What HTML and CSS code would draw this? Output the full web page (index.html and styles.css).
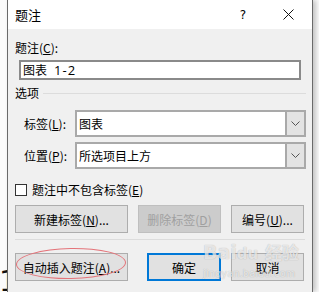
FILE: index.html
```html
<!DOCTYPE html>
<html lang="zh">
<head>
  <meta charset="UTF-8" />
  <title>题注</title>
  <link rel="stylesheet" href="styles.css">
</head>
<body>
  <div class="behind">1</div>
  <div class="dialog">
    <div class="titlebar">
      <span class="title">题注</span>
      <span class="help">?</span>
      <span class="close">
        <svg width="11" height="11" viewBox="0 0 11 11"><path d="M0.5 0.5 L10.5 10.5 M10.5 0.5 L0.5 10.5" stroke="#111" stroke-width="1" fill="none"/></svg>
      </span>
    </div>

    <div class="content">
      <div class="label">题注(<u>C</u>):</div>
      <div class="textbox">图表<span class="num">1-2</span></div>

      <div class="group"><span>选项</span><div class="rule"></div></div>

      <div class="field-row">
        <span class="field-label">标签(<u>L</u>):</span>
        <div class="combo">
          <span class="combo-text">图表</span>
          <span class="combo-btn"><svg width="9" height="5" viewBox="0 0 9 5"><path d="M0.5 0.5 L4.5 4.5 L8.5 0.5" stroke="#555" fill="none"/></svg></span>
        </div>
      </div>
      <div class="field-row second">
        <span class="field-label">位置(<u>P</u>):</span>
        <div class="combo">
          <span class="combo-text">所选项目上方</span>
          <span class="combo-btn"><svg width="9" height="5" viewBox="0 0 9 5"><path d="M0.5 0.5 L4.5 4.5 L8.5 0.5" stroke="#555" fill="none"/></svg></span>
        </div>
      </div>

      <div class="check"><span class="box"></span>题注中不包含标签(<u>E</u>)</div>

      <div class="btn-row">
        <button class="btn wide">新建标签(<u>N</u>)...</button>
        <button class="btn mid disabled">删除标签(<u>D</u>)</button>
        <button class="btn narrow">编号(<u>U</u>)...</button>
      </div>

      <div class="sep"></div>

      <div class="btn-row last">
        <button class="btn wide">自动插入题注(<u>A</u>)...</button>
        <button class="btn ok">确定</button>
        <button class="btn narrow">取消</button>
      </div>
    </div>

    <div class="ellipse"></div>
    <div class="watermark">
      <div class="wm-logo">Bai<span class="paw">du</span> <span class="wm-cn">经验</span></div>
      <div class="wm-url">jingyan.baidu.com</div>
    </div>
  </div>
</body>
</html>
```

FILE: styles.css
```css
body {
  margin: 0;
  padding: 0 0 0 7px;
  width: 319px;
  height: 292px;
  overflow: hidden;
  box-sizing: border-box;
  background: #fbfbfb;
  font-family: "Noto Sans CJK SC", "Noto Sans", sans-serif;
  font-size: 12px;
  color: #000;
  position: relative;
}

.behind {
  position: absolute;
  left: -1px;
  top: 266px;
  font-family: "DejaVu Sans", sans-serif;
  font-size: 29px;
  line-height: 30px;
  color: #111;
}

.dialog {
  position: relative;
  width: 306px;
  height: 292px;
  box-sizing: border-box;
  border-left: 1px solid #6a6a6a;
  border-right: 1px solid #6a6a6a;
  background: #f0f0f0;
  box-shadow: 3px 0 5px rgba(0, 0, 0, 0.22);
}

u {
  text-decoration: underline;
  text-underline-offset: 1px;
}

/* title bar */
.titlebar {
  height: 29px;
  background: #fff;
  display: flex;
  align-items: center;
  padding-left: 7px;
}

.title {
  font-size: 13px;
  line-height: 16px;
  flex: 1;
}

.help {
  font-family: "DejaVu Sans", sans-serif;
  font-size: 12px;
  width: 10px;
  text-align: center;
  margin-right: 35px;
}

.close {
  display: flex;
  width: 11px;
  margin-right: 18px;
}

/* body */
.content {
  padding: 11px 7px 0 7px;
}

.label {
  line-height: 16px;
}

.textbox {
  margin: 4px 0 0 4px;
  width: 282px;
  height: 20px;
  box-sizing: border-box;
  border: 2px solid #8a8a8a;
  background: #fff;
  line-height: 16px;
  padding-left: 2px;
  font-size: 12px;
}

.num {
  font-family: "Open Sans", sans-serif;
  font-size: 13px;
  letter-spacing: 1px;
  margin-left: 7px;
}

.group {
  margin-top: 5px;
  display: flex;
  align-items: center;
  line-height: 16px;
  margin-right: -1px;
}

.rule {
  flex: 1;
  height: 1px;
  background: #dcdcdc;
  margin-left: 4px;
}

.field-row {
  margin-top: 9px;
  display: flex;
  align-items: center;
  margin-right: -1px;
}

.field-row.second {
  margin-top: 5px;
}

.field-label {
  width: 51px;
  padding-left: 9px;
  line-height: 16px;
}

.combo {
  flex: 1;
  height: 27px;
  box-sizing: border-box;
  border: 2px solid #a9a9a9;
  background: #fff;
  display: flex;
}

.combo-text {
  flex: 1;
  line-height: 23px;
  padding-left: 2px;
}

.combo-btn {
  width: 17px;
  background: #e3e3e3;
  border-left: 2px solid #a9a9a9;
  display: flex;
  align-items: center;
  justify-content: center;
}

.check {
  margin-top: 13px;
  display: flex;
  align-items: center;
  line-height: 16px;
}

.box {
  width: 12px;
  height: 12px;
  box-sizing: border-box;
  border: 1px solid #333;
  background: #fff;
  margin-right: 5px;
}

/* buttons */
.btn-row {
  margin-top: 7px;
  display: flex;
  gap: 10px;
}

.btn-row.last {
  margin-top: 13px;
}

.btn {
  height: 28px;
  box-sizing: border-box;
  border: 1px solid #adadad;
  background: #e1e1e1;
  font-family: inherit;
  font-size: 12px;
  color: #000;
  padding: 0;
}

.btn.wide {
  width: 113px;
}

.btn.mid {
  width: 83px;
}

.btn.narrow {
  width: 73px;
}

.btn.ok {
  width: 74px;
  margin-left: 9px;
  border: 2px solid #0078d7;
}

.btn.disabled {
  background: #cccccc;
  border-color: #bfbfbf;
  color: #a0a0a0;
}

.sep {
  margin-top: 6px;
  height: 1px;
  background: #dcdcdc;
}

/* red annotation */
.ellipse {
  position: absolute;
  left: 8px;
  top: 248px;
  width: 108px;
  height: 29px;
  border: 1px solid #e4747a;
  border-radius: 50%;
  transform: rotate(-1deg);
}

/* watermark */
.watermark {
  position: absolute;
  left: 195px;
  top: 240px;
  color: rgba(255, 255, 255, 0.7);
  text-shadow: 0 0 1px rgba(0, 0, 0, 0.3);
  font-family: "DejaVu Sans", sans-serif;
}

.wm-logo {
  font-size: 19px;
  font-weight: bold;
  line-height: 24px;
}

.wm-cn {
  font-family: "Noto Sans CJK SC", sans-serif;
  font-size: 17px;
}

.paw {
  font-size: 15px;
}

.wm-url {
  font-size: 10px;
  line-height: 12px;
  margin-top: 2px;
}
```
